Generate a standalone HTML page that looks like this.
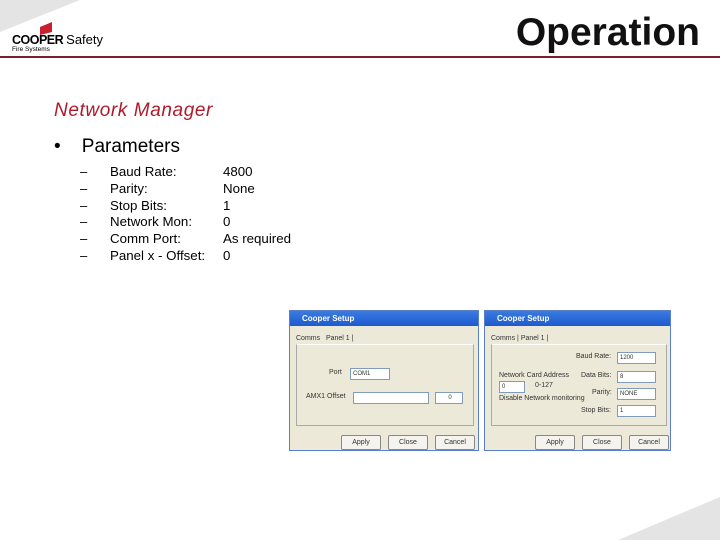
<!DOCTYPE html>
<html><head><style>
body{margin:0;width:720px;height:540px;position:relative;background:#fff;font-family:"Liberation Sans",sans-serif;overflow:hidden}
.a{position:absolute}
.dlg{position:absolute;background:#ece9d8;border:1px solid #5a7ec8;font-size:7px;color:#333}
.tb{position:absolute;left:0;right:0;top:0;height:15px;background:linear-gradient(#3a7be0,#1d5ad0);color:#fff;font-weight:bold;font-size:8px;line-height:15px;padding-left:12px}
.btn{position:absolute;border:1px solid #888;background:#f4f3ee;border-radius:2px;height:13px;line-height:13px;text-align:center;font-size:7px}
.inp{position:absolute;background:#fff;border:1px solid #7f9db9;height:10px;font-size:6px;line-height:10px;padding-left:2px}
</style></head><body>
<svg class="a" style="left:0;top:0" width="720" height="540">
<polygon points="0,0 80,0 0,32" fill="#e4e4e4"/>
<polygon points="720,497 720,540 618,540" fill="#e4e4e4"/>
<polygon points="40,27 52,22 52,32 40,35" fill="#c8202f"/>
<rect x="0" y="56" width="720" height="2" fill="#7a1e2c"/>
</svg>
<div class="a" style="left:12px;top:32px;font-size:12.5px;font-weight:900;letter-spacing:-0.5px">COOPER <span style="font-weight:normal;letter-spacing:0;font-size:13px">Safety</span></div>
<div class="a" style="left:12px;top:46px;font-size:6.5px">Fire Systems</div>
<div class="a" style="right:20px;top:11px;font-size:39px;font-weight:bold;color:#111">Operation</div>
<div class="a" style="left:54px;top:100px;font-size:19px;letter-spacing:0.6px;font-style:italic;color:#b01a2a">Network Manager</div>
<div class="a" style="left:54px;top:136px;font-size:19px">•&nbsp;&nbsp;&nbsp;&nbsp;Parameters</div>
<div class="a" style="left:80px;top:164px;font-size:13px;line-height:16.8px">–<br>–<br>–<br>–<br>–<br>–</div>
<div class="a" style="left:110px;top:164px;font-size:13.3px;line-height:16.8px">Baud Rate:<br>Parity:<br>Stop Bits:<br>Network Mon:<br>Comm Port:<br>Panel x - Offset:</div>
<div class="a" style="left:223px;top:164px;font-size:13.3px;line-height:16.8px">4800<br>None<br>1<br>0<br>As required<br>0</div>

<div class="dlg" style="left:289px;top:310px;width:188px;height:139px">
<div class="tb">Cooper Setup</div>
<div class="a" style="left:6px;top:24px">Comms &nbsp; Panel 1 |</div>
<div class="a" style="left:6px;top:33px;width:176px;height:80px;border:1px solid #aaa;border-top-color:#fff"></div>
<div class="a" style="left:39px;top:58px">Port</div>
<div class="inp" style="left:60px;top:57px;width:36px">COM1</div>
<div class="a" style="left:16px;top:82px">AMX1 Offset</div>
<div class="inp" style="left:63px;top:81px;width:72px"></div>
<div class="inp" style="left:145px;top:81px;width:24px;text-align:center">0</div>
<div class="btn" style="left:51px;top:124px;width:38px">Apply</div>
<div class="btn" style="left:98px;top:124px;width:38px">Close</div>
<div class="btn" style="left:145px;top:124px;width:38px">Cancel</div>
</div>

<div class="dlg" style="left:484px;top:310px;width:185px;height:139px">
<div class="tb">Cooper Setup</div>
<div class="a" style="left:6px;top:24px">Comms | Panel 1 |</div>
<div class="a" style="left:6px;top:33px;width:174px;height:80px;border:1px solid #aaa;border-top-color:#fff"></div>
<div class="a" style="left:91px;top:42px">Baud Rate:</div><div class="inp" style="left:132px;top:41px;width:35px">1200</div>
<div class="a" style="left:96px;top:61px">Data Bits:</div><div class="inp" style="left:132px;top:60px;width:35px">8</div>
<div class="a" style="left:14px;top:61px">Network Card Address</div>
<div class="inp" style="left:14px;top:70px;width:22px">0</div><div class="a" style="left:50px;top:71px">0-127</div>
<div class="a" style="left:107px;top:78px">Parity:</div><div class="inp" style="left:132px;top:77px;width:35px">NONE</div>
<div class="a" style="left:14px;top:84px">Disable Network monitoring</div>
<div class="a" style="left:96px;top:96px">Stop Bits:</div><div class="inp" style="left:132px;top:94px;width:35px">1</div>
<div class="btn" style="left:50px;top:124px;width:38px">Apply</div>
<div class="btn" style="left:97px;top:124px;width:38px">Close</div>
<div class="btn" style="left:144px;top:124px;width:38px">Cancel</div>
</div>
</body></html>
